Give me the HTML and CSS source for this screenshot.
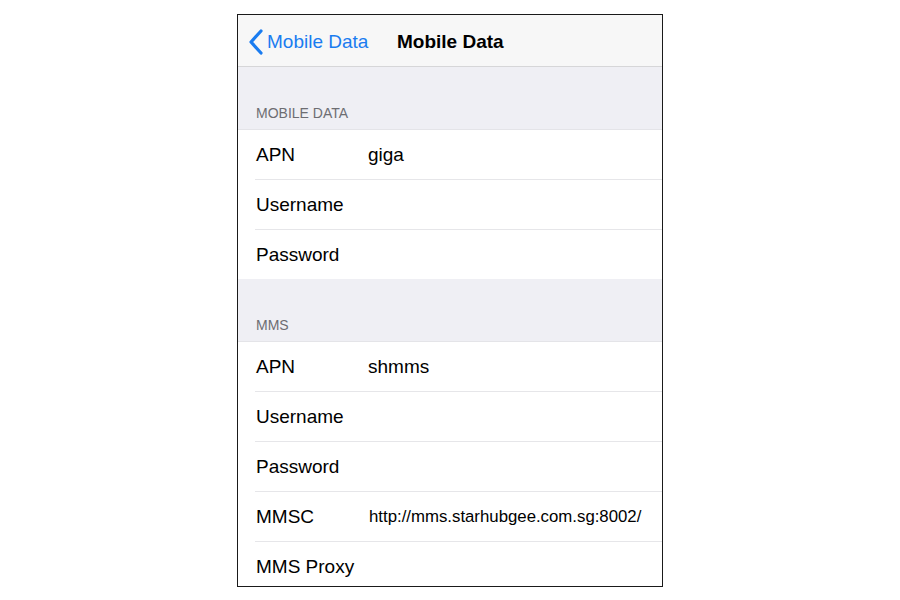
FILE: index.html
```html
<!DOCTYPE html>
<html>
<head>
<meta charset="utf-8">
<link rel="stylesheet" href="styles.css">
</head>
<body>
<div class="phone">
  <div class="nav">
    <div class="back">
      <svg class="chev" width="16" height="26" viewBox="0 0 16 26"><polyline points="13,2 3,13 13,24" fill="none" stroke="#1a7cf0" stroke-width="3.2" stroke-linecap="round" stroke-linejoin="round"/></svg>
      <span class="back-text">Mobile Data</span>
    </div>
    <div class="title">Mobile Data</div>
  </div>
  <div class="section-head">MOBILE DATA</div>
  <div class="group">
    <div class="row"><span class="label">APN</span><span class="value">giga</span></div>
    <div class="row"><span class="label">Username</span><span class="value"></span></div>
    <div class="row"><span class="label">Password</span><span class="value"></span></div>
  </div>
  <div class="section-head">MMS</div>
  <div class="group">
    <div class="row"><span class="label">APN</span><span class="value">shmms</span></div>
    <div class="row"><span class="label">Username</span><span class="value"></span></div>
    <div class="row"><span class="label">Password</span><span class="value"></span></div>
    <div class="row"><span class="label">MMSC</span><span class="value small">http://mms.starhubgee.com.sg:8002/</span></div>
    <div class="row"><span class="label">MMS Proxy</span><span class="value"></span></div>
  </div>
</div>
</body>
</html>
```
FILE: styles.css
```css
html, body {
  margin: 0;
  padding: 0;
  background: #ffffff;
}
body {
  padding-top: 14px;
  font-family: "Liberation Sans", Arial, sans-serif;
  color: #000;
}
.phone {
  margin-left: 237px;
  width: 424px;
  height: 571px;
  border: 1px solid #1a1a1a;
  overflow: hidden;
  background: #efeff4;
}
.nav {
  height: 51px;
  background: #f7f7f7;
  border-bottom: 1px solid #d6d6d8;
  display: flex;
  align-items: center;
  padding-left: 10px;
}
.back {
  display: flex;
  align-items: center;
  width: 149px;
}
.chev {
  margin-top: 3px;
  margin-right: 4px;
}
.back-text {
  font-size: 19px;
  color: #1a7cf0;
  margin-top: 2px;
  margin-left: -1px;
}
.title {
  font-size: 19px;
  font-weight: bold;
  margin-top: 2px;
}
.section-head {
  height: 62px;
  box-sizing: border-box;
  display: flex;
  align-items: flex-end;
  padding: 0 0 8px 18px;
  font-size: 14px;
  line-height: 16px;
  color: #6d6d72;
}
.group {
  background: #fff;
}
.row {
  height: 50px;
  box-sizing: border-box;
  display: flex;
  align-items: center;
  padding-left: 18px;
  padding-top: 2px;
  position: relative;
}
.row::before {
  content: "";
  position: absolute;
  left: 17px;
  right: 0;
  top: 0;
  height: 1px;
  background: #e6e6e9;
}
.row:first-child::before {
  left: 0;
  background: #e4e4e8;
}
.label {
  width: 112px;
  font-size: 19px;
}
.value {
  font-size: 19px;
}
.value.small {
  font-size: 16.8px;
  padding-left: 1px;
}
```
